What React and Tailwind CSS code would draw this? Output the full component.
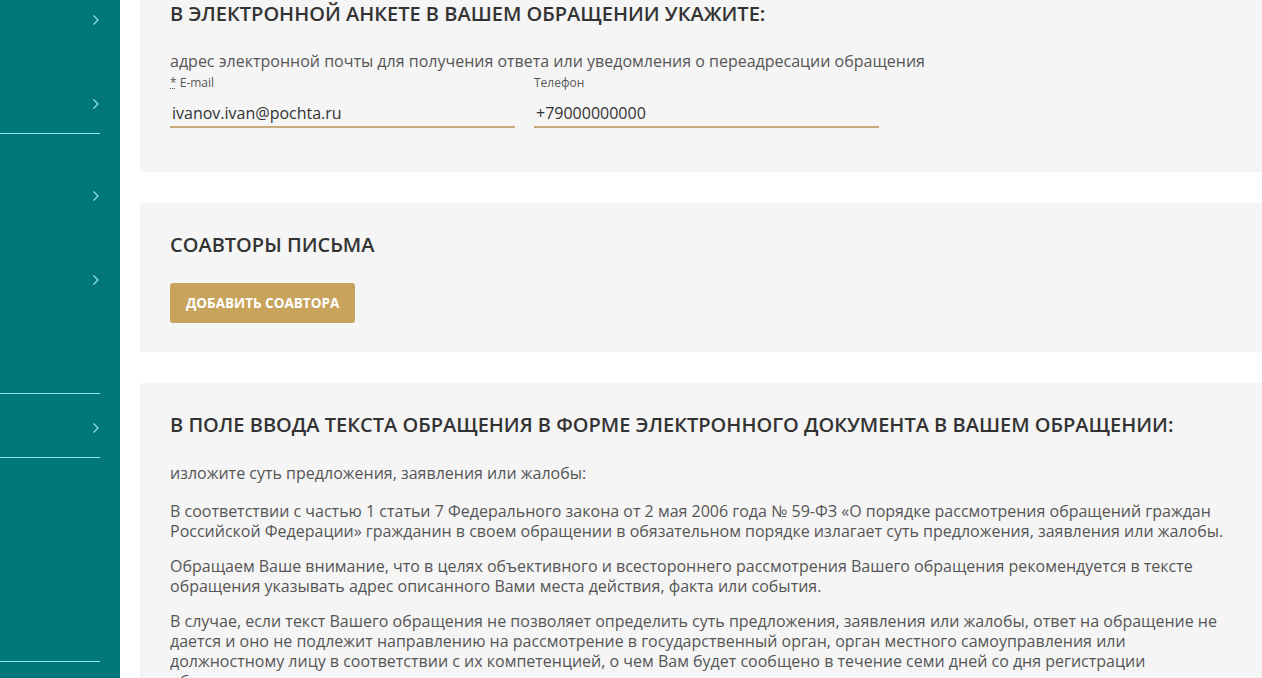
import React from 'react';

const font = { fontFamily: '"Open Sans", "Noto Sans", sans-serif' };

function Chevron() {
  return (
    <svg width="8" height="12" viewBox="0 0 8 12" className="text-[#8fe3e6]">
      <path d="M1.5 1.5 L6 6 L1.5 10.5" fill="none" stroke="currentColor" strokeWidth="1.3" />
    </svg>
  );
}

function Sidebar() {
  return (
    <aside className="w-[120px] shrink-0 bg-[#00787a] flex flex-col">
      <div className="h-[42px] w-[100px] flex items-start justify-end pt-[14px]"><Chevron /></div>
      <div className="h-[92px] w-[100px] border-b border-[#8fe3e6] flex items-start justify-end pt-[56px]">
        <Chevron />
      </div>
      <div className="h-[260px] w-[100px] border-b border-[#8fe3e6] flex flex-col items-end">
        <div className="mt-[56px]"><Chevron /></div>
        <div className="mt-[72px]"><Chevron /></div>
      </div>
      <div className="h-[64px] w-[100px] border-b border-[#8fe3e6] flex items-start justify-end">
        <div className="mt-[28px]"><Chevron /></div>
      </div>
      <div className="h-[204px] w-[100px] border-b border-[#8fe3e6]" />
      <div className="flex-1" />
    </aside>
  );
}

function Field({ label, value, required }) {
  return (
    <div className="w-[345px]">
      <div className="text-[12px] leading-[14px] text-[#555] h-[14px]">
        {required && <span className="underline decoration-dotted">*</span>} {label}
      </div>
      <div className="mt-[13px] border-b-2 border-[#c8a97a] pb-[3px] px-[2px] text-[16px] leading-[20px] text-[#333]">{value}</div>
    </div>
  );
}

export default function App() {
  return (
    <div className="w-[1262px] h-[678px] overflow-hidden bg-white flex" style={font}>
      <Sidebar />
      <main className="flex-1 pl-[20px] flex flex-col gap-[31px]">
        <section className="shrink-0 bg-[#f5f5f5] h-[172px] px-[30px] pt-[1px]">
          <h2 className="text-[20px] leading-[26px] font-semibold uppercase text-[#333]">В электронной анкете в вашем обращении укажите:</h2>
          <p className="mt-[23px] text-[16px] leading-[22px] text-[#555]">адрес электронной почты для получения ответа или уведомления о переадресации обращения</p>
          <div className="flex gap-[19px] mt-[4px]">
            <Field label="E-mail" value="ivanov.ivan@pochta.ru" required />
            <Field label="Телефон" value="+79000000000" />
          </div>
        </section>

        <section className="shrink-0 bg-[#f5f5f5] h-[149px] px-[30px] pt-[29px]">
          <h2 className="text-[20px] leading-[26px] font-semibold uppercase text-[#333]">Соавторы письма</h2>
          <button className="mt-[25px] h-[40px] px-[16px] rounded-[3px] bg-[#c8a35c] text-white text-[13.5px] font-bold uppercase">Добавить соавтора</button>
        </section>

        <section className="shrink-0 bg-[#f5f5f5] h-[400px] px-[30px] pt-[29px] text-[16px] leading-[20px] text-[#555]">
          <h2 className="text-[20px] leading-[26px] font-semibold uppercase text-[#333] mb-[25px]">В поле ввода текста обращения в форме электронного документа в вашем обращении:</h2>
          <p>изложите суть предложения, заявления или жалобы:</p>
          <p className="mt-[18px]">В соответствии с частью 1 статьи 7 Федерального закона от 2 мая 2006 года № 59-ФЗ «О порядке рассмотрения обращений граждан Российской Федерации» гражданин в своем обращении в обязательном порядке излагает суть предложения, заявления или жалобы.</p>
          <p className="mt-[15px]">Обращаем Ваше внимание, что в целях объективного и всестороннего рассмотрения Вашего обращения рекомендуется в тексте обращения указывать адрес описанного Вами места действия, факта или события.</p>
          <p className="mt-[15px] pr-[8px]">В случае, если текст Вашего обращения не позволяет определить суть предложения, заявления или жалобы, ответ на обращение не дается и оно не подлежит направлению на рассмотрение в государственный орган, орган местного самоуправления или должностному лицу в соответствии с их компетенцией, о чем Вам будет сообщено в течение семи дней со дня регистрации обращения.</p>
        </section>
      </main>
    </div>
  );
}
